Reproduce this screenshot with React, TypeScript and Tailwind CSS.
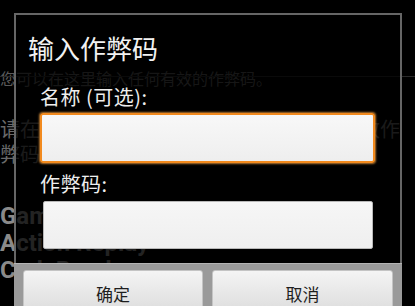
export default function App() {
  return (
    <div className="relative w-[415px] h-[306px] overflow-hidden bg-black font-['Noto_Sans_CJK_SC','Noto_Sans',sans-serif]">
      <div className="flex flex-col whitespace-nowrap">
        <p className="mt-[68px] text-[16px] leading-[20px] text-[#5a5a5a]">您可以在这里输入任何有效的作弊码。</p>
        <div className="mt-[28px] text-[20px] leading-[25px] text-[#6a6a6a]">
          <p>请在下方输入作弊码的名称以及对应的有效作</p>
          <p>弊码。</p>
        </div>
        <div className="mt-[37px] font-['Roboto',sans-serif] font-bold text-[24px] leading-[27px] text-[#8a8a8a]">
          <p>GameShark</p>
          <p>Action Replay</p>
          <p>CodeBreaker</p>
        </div>
      </div>
      <div className="absolute left-0 right-0 top-[76px] h-px bg-[#2a2a2a]" />
      <div className="absolute left-[14px] top-[13px] w-[388px] h-[300px] border-2 border-b-0 border-[#666] bg-black/75 flex flex-col">
        <h1 className="mt-[18px] pl-[12px] text-[26px] leading-[30px] text-[#f2f2f2] font-normal">输入作弊码</h1>
        <label className="mt-[22px] ml-[24px] text-[20px] leading-[24px] tracking-[0.5px] text-[#eeeeee]">名称 (可选):</label>
        <div className="mt-[4px] ml-[24px] w-[335px] h-[50px] shrink-0 rounded-[3px] border-2 border-[#f28a1e] bg-linear-to-b from-[#f8f8f8] to-[#eeeeee] shadow-[0_0_2px_1px_rgba(255,170,70,0.7)]" />
        <label className="mt-[9px] ml-[24px] text-[20px] leading-[24px] tracking-[0.5px] text-[#eeeeee]">作弊码:</label>
        <div className="mt-[5px] ml-[27px] w-[330px] h-[48px] shrink-0 rounded-[2px] border border-[#b8b8b8] bg-linear-to-b from-[#f6f6f6] to-[#efefef]" />
        <div className="mt-[14px] -mx-[2px] flex gap-[9px] pt-[6px] pl-[9px] pr-[8px] bg-[#9a9a9a] border-t border-[#b4b4b4] h-[60px] shrink-0">
          <button className="w-[180px] h-[48px] flex items-center justify-center rounded-t-[3px] border border-[#c4c4c4] bg-linear-to-b from-[#f4f4f4] to-[#dadada] text-[17px] text-[#1e1e1e]">确定</button>
          <button className="w-[181px] h-[48px] flex items-center justify-center rounded-t-[3px] border border-[#c4c4c4] bg-linear-to-b from-[#f4f4f4] to-[#dadada] text-[17px] text-[#1e1e1e]">取消</button>
        </div>
      </div>
    </div>
  );
}
